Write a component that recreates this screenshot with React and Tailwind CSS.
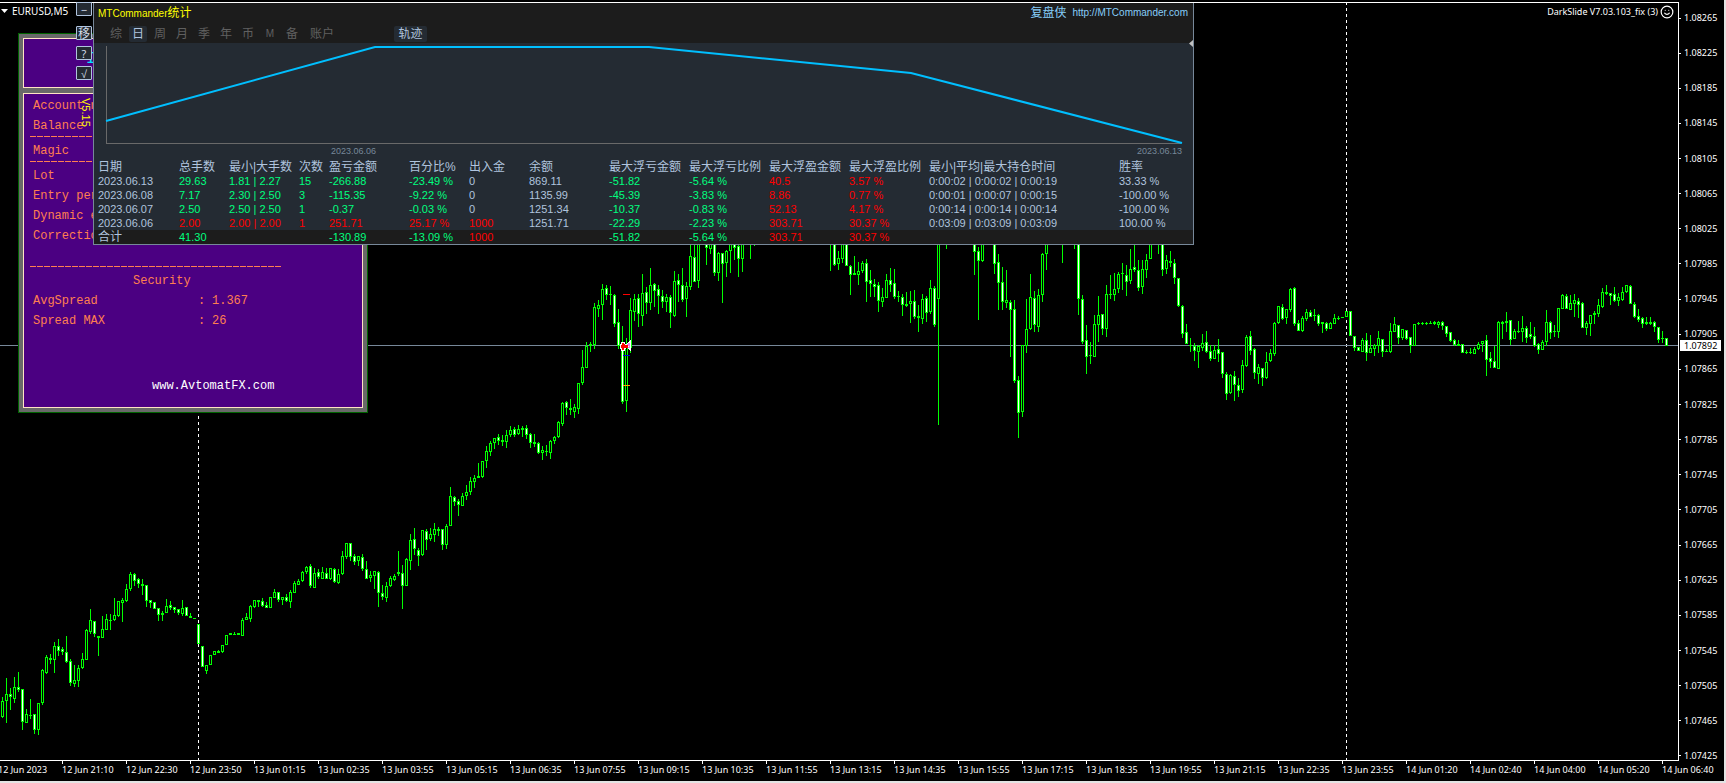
import React from "react";
import { Smile } from "lucide-react";

const CANDLE_STEP = 4;
const FIRST_CANDLE_X = 2;

// One candle per comma: high, body top, body bottom, low; "f" marks a falling (filled) candle.
// "-" leaves the given number of slots empty.
const SERIES = `
697 701 717 718,678 694 701 723,688 694 697 710 f,677 687 699 703,672 687 690 692 f,689 689 722 730 f,
709 714 723 723,699 715 716 719,714 714 730 734 f,703 703 730 735,669 670 703 705,655 657 673 674,
654 658 660 664 f,642 646 660 673,639 646 651 656 f,647 649 652 655 f,636 652 662 663 f,659 661 683 686 f,
665 680 684 687,665 668 681 687,653 659 668 669,629 630 660 660,609 620 632 634,621 621 634 637 f,
636 636 638 656,616 629 638 638,614 619 630 630,614 620 621 630,598 615 620 621,601 601 616 617,
598 600 603 622,584 589 601 602,572 574 589 591,573 574 581 586 f,578 579 584 588 f,579 584 586 595,
585 585 601 607 f,600 600 603 608 f,602 602 609 609 f,608 608 615 621 f,611 613 615 621,599 606 613 613,
601 605 608 610 f,607 607 610 613 f,609 609 613 615 f,600 608 614 616,607 607 616 616 f,613 616 618 618,
618 618 619 619,624 624 644 644 f,646 646 667 667 f,665 665 671 674,655 655 665 665,651 651 655 655,
650 651 653 653,645 645 652 653,635 635 645 645,633 633 635 635,632 634 635 635,633 633 635 635,
618 620 636 636,613 617 620 620,605 606 619 622,600 600 607 608,600 600 602 607,598 601 606 607 f,
602 605 608 608 f,597 597 608 608,589 592 598 598,592 592 600 602 f,597 597 600 605,594 597 601 602 f,
590 592 602 608,581 583 593 593,579 581 585 585,571 572 581 582,566 567 572 574,564 566 586 588 f,
568 573 588 588,569 572 577 579 f,567 572 579 579,568 573 579 579 f,568 568 579 580,568 569 582 583 f,
569 574 583 584,551 556 574 575,543 543 557 559,543 543 557 561 f,554 556 562 565 f,556 556 561 566,
554 557 569 571 f,561 569 579 579 f,571 575 578 582,571 571 576 589,571 572 593 607 f,585 593 597 600 f,
582 586 598 602,576 578 586 587,574 576 580 581,551 572 574 576,565 573 586 609 f,558 559 586 586,
534 540 561 570,528 539 549 555 f,548 550 556 566 f,530 530 555 556,529 531 540 550 f,528 534 539 541,
523 529 535 542,527 529 531 536,529 529 545 550 f,524 526 545 549,487 496 526 526,496 497 502 506 f,
499 501 505 516 f,493 496 506 506,485 492 496 500,477 481 492 495,475 478 482 488,463 476 478 478,
461 461 477 478,446 451 461 468,441 443 452 456,438 438 443 449,434 437 441 445 f,435 440 442 446,
430 435 442 448,426 430 435 437,427 429 435 437 f,425 429 434 435,426 428 430 437,425 428 435 439 f,
433 434 443 448 f,434 442 444 447,442 443 453 454 f,446 450 453 460,445 451 452 456,440 441 453 459,
436 437 441 444,421 422 437 438,402 403 424 426,401 402 408 415 f,399 408 410 415,404 407 412 418,
383 383 409 414,350 367 383 385,342 346 368 368,342 344 346 352,303 307 345 349,300 305 309 317,
284 289 305 320,285 288 295 300 f,286 294 295 305,294 295 324 327 f,309 322 346 349 f,326 346 402 404 f,
338 346 401 412,298 310 348 353,294 299 312 321,294 298 314 327 f,274 293 316 326,287 292 303 314 f,
268 285 303 310,283 284 291 307 f,285 289 296 314 f,290 296 302 308 f,294 297 302 312,295 297 313 328 f,
271 281 316 317,274 280 285 302 f,268 285 300 302 f,282 286 299 317,236 256 287 290,236 257 282 282 f,
236 236 281 288,-1,236 236 248 265 f,236 236 249 254,236 236 273 276 f,252 253 273 281,253 253 264 303 f,
250 251 263 277,236 236 251 273,236 236 248 260 f,236 246 259 277 f,236 236 259 272,-1,236 236 236 259,
236 236 236 246,-18,236 236 236 271,236 236 265 266 f,251 258 264 270,236 236 259 263,236 236 266 266 f,
265 266 275 295 f,256 273 275 275,262 271 275 285,261 263 271 273,259 263 282 302 f,270 280 284 297 f,
279 284 287 297 f,282 285 301 312 f,288 297 302 307,274 280 298 298,268 280 285 292 f,269 283 297 299 f,
291 296 297 302,294 297 305 316 f,292 304 306 307,291 301 304 323,290 301 317 319 f,305 316 318 332,
294 299 319 324,296 298 313 322 f,280 288 312 314,286 288 325 327 f,236 236 299 425,-1,236 236 236 249,-6,
236 236 252 275 f,247 251 261 320 f,236 236 261 262,-2,236 236 264 274 f,254 262 283 310 f,267 282 302 310 f,
270 300 303 308,300 302 310 357 f,300 309 381 383 f,376 380 413 438 f,345 345 412 417,299 329 346 353,
274 297 329 330,291 298 325 332 f,289 295 327 332,253 254 295 302,236 236 254 270,-3,236 236 236 263,-2,
236 236 236 249,236 236 299 315 f,295 299 342 344 f,325 340 357 374 f,342 355 356 364,315 324 357 357,
296 315 325 342,314 314 329 335 f,285 294 329 337,275 294 295 299,273 289 295 301,272 274 289 293,
263 273 274 290,265 275 282 296 f,249 269 281 284,236 267 270 272 f,260 270 288 291 f,260 269 287 294,
254 260 270 278,236 236 259 259,-1,236 236 236 254,236 236 270 276 f,255 260 269 274,251 261 263 267,
259 263 278 284 f,278 278 306 307 f,305 306 334 338 f,324 332 344 344 f,338 345 346 352,343 346 351 361 f,
345 346 352 368,334 343 348 351,331 342 352 353 f,345 351 359 361 f,345 350 359 359,339 349 354 362 f,
352 352 374 378 f,372 374 394 400 f,374 375 393 394,371 376 385 401 f,378 385 391 397 f,360 365 390 393,
335 337 366 367,331 336 351 355 f,348 349 373 379 f,364 367 374 384,368 368 378 386 f,352 362 378 379,
349 353 361 362,322 323 354 356,306 306 323 324,304 307 319 320 f,309 309 318 324,288 289 310 312,
287 288 324 326 f,320 323 331 331 f,316 318 331 332,309 312 319 321,310 312 317 317 f,309 315 316 321,
314 315 324 326 f,322 322 324 333,322 323 329 331 f,322 323 329 329,314 318 324 324,316 318 319 320,
317 317 318 318,311 311 317 317,311 311 336 336 f,336 336 348 351 f,347 347 351 351 f,338 340 352 352,
333 340 353 361 f,335 348 353 353,344 345 349 356,331 338 346 353,339 339 352 357 f,349 351 352 352,
323 331 352 353,317 324 332 332,325 325 338 344 f,329 329 338 340,330 330 339 340 f,337 337 346 353 f,
324 324 346 346,322 323 324 325,322 323 324 325,322 323 324 325,321 323 324 324,321 322 324 325,
321 322 325 328,321 322 326 330 f,326 326 334 337 f,332 332 341 342 f,339 340 345 346 f,340 344 346 346,
344 344 353 353 f,350 352 353 354,348 352 353 354,347 349 354 354,342 344 349 350,341 341 344 352,
335 340 360 376 f,352 358 362 368 f,346 361 368 368 f,321 322 369 369,321 322 324 339,312 321 323 332,
320 320 340 345 f,329 331 339 339,321 331 332 333,316 328 332 342,326 328 338 343 f,322 334 337 339 f,
327 336 346 347 f,343 344 350 354 f,340 342 350 350,310 322 342 346,321 322 333 339 f,325 331 332 337,
308 308 332 338,294 295 309 309,294 296 309 309 f,295 303 310 310,294 300 304 317,298 301 305 318 f,
302 303 328 328 f,321 323 328 335,315 315 324 336,311 313 315 324,299 305 314 317,288 292 307 308,
285 292 294 295,293 293 296 305 f,287 294 301 302 f,293 297 301 306,287 292 300 301,285 285 292 293,
285 286 304 304 f,302 304 317 318 f,309 316 320 322 f,317 318 324 328 f,317 322 324 325,317 322 324 325,
321 322 327 332 f,327 327 340 343 f,331 338 339 343,338 338 346 346 f`;

function parseSeries(text) {
  const candles = [];
  let slot = 0;
  for (const entry of text.replace(/\n/g, "").split(",")) {
    if (entry.startsWith("-")) {
      slot += Number(entry.slice(1));
      continue;
    }
    const [high, top, bottom, low, mark] = entry.split(" ");
    candles.push({
      x: FIRST_CANDLE_X + slot * CANDLE_STEP,
      high: +high,
      top: +top,
      bottom: +bottom,
      low: +low,
      falling: mark === "f",
    });
    slot += 1;
  }
  return candles;
}

const CANDLES = parseSeries(SERIES);

const PRICES = Array.from({ length: 22 }, (_, i) => (1.08265 - i * 0.0004).toFixed(5));

const TIMES = [
  "12 Jun 2023", "12 Jun 21:10", "12 Jun 22:30", "12 Jun 23:50", "13 Jun 01:15", "13 Jun 02:35",
  "13 Jun 03:55", "13 Jun 05:15", "13 Jun 06:35", "13 Jun 07:55", "13 Jun 09:15", "13 Jun 10:35",
  "13 Jun 11:55", "13 Jun 13:15", "13 Jun 14:35", "13 Jun 15:55", "13 Jun 17:15", "13 Jun 18:35",
  "13 Jun 19:55", "13 Jun 21:15", "13 Jun 22:35", "13 Jun 23:55", "14 Jun 01:20", "14 Jun 02:40",
  "14 Jun 04:00", "14 Jun 05:20", "14 Jun 06:40",
];

const COLUMNS = [
  ["日期", "w-[80px]"], ["总手数", "w-[50px]"], ["最小|大手数", "w-[70px]"], ["次数", "w-[30px]"],
  ["盈亏金额", "w-[80px]"], ["百分比%", "w-[60px]"], ["出入金", "w-[60px]"], ["余额", "w-[80px]"],
  ["最大浮亏金额", "w-[80px]"], ["最大浮亏比例", "w-[80px]"], ["最大浮盈金额", "w-[80px]"],
  ["最大浮盈比例", "w-[80px]"], ["最小|平均|最大持仓时间", "w-[190px]"], ["胜率", "w-auto"],
];

// Column tones: n = neutral, g = green, r = red.
const ROWS = [
  { tones: "ngggggnnggrrnn", cells: ["2023.06.13", "29.63", "1.81 | 2.27", "15", "-266.88", "-23.49 %", "0", "869.11", "-51.82", "-5.64 %", "40.5", "3.57 %", "0:00:02 | 0:00:02 | 0:00:19", "33.33 %"] },
  { tones: "ngggggnnggrrnn", cells: ["2023.06.08", "7.17", "2.30 | 2.50", "3", "-115.35", "-9.22 %", "0", "1135.99", "-45.39", "-3.83 %", "8.86", "0.77 %", "0:00:01 | 0:00:07 | 0:00:15", "-100.00 %"] },
  { tones: "ngggggnnggrrnn", cells: ["2023.06.07", "2.50", "2.50 | 2.50", "1", "-0.37", "-0.03 %", "0", "1251.34", "-10.37", "-0.83 %", "52.13", "4.17 %", "0:00:14 | 0:00:14 | 0:00:14", "-100.00 %"] },
  { tones: "nrrrrrrnggrrnn", cells: ["2023.06.06", "2.00", "2.00 | 2.00", "1", "251.71", "25.17 %", "1000", "1251.71", "-22.29", "-2.23 %", "303.71", "30.37 %", "0:03:09 | 0:03:09 | 0:03:09", "100.00 %"] },
];
const TOTAL = { tones: "ngggggrnggrrnn", cells: ["合计", "41.30", "", "", "-130.89", "-13.09 %", "1000", "", "-51.82", "-5.64 %", "303.71", "30.37 %", "", ""] };

const TONES = { n: "text-[#b0c4de]", g: "text-[#00ff7f]", r: "text-[#ff0000]" };

function Candle({ x, high, top, bottom, low, falling }) {
  const inner = bottom - top - 2;
  return (
    <g>
      <rect x={x} y={high} width="1" height={Math.max(low - high, 1)} fill="#00ff00" />
      {bottom > top && <rect x={x - 1} y={top} width="3" height={bottom - top} fill="#00ff00" />}
      {inner > 0 && <rect x={x} y={top + 1} width="1" height={inner} fill={falling ? "#ffffff" : "#000000"} />}
    </g>
  );
}

function PriceChart() {
  return (
    <svg className="block h-full w-full" viewBox="0 3 1678 757" preserveAspectRatio="none" shapeRendering="crispEdges">
      <path d="M198.5 2V760M1346.5 2V760" stroke="#ffffff" strokeDasharray="3 3" />
      <rect x="0" y="345" width="1678" height="1" fill="#778899" />
      {CANDLES.map((c) => (
        <Candle key={c.x} {...c} />
      ))}
      <rect x="623" y="294" width="7" height="1" fill="#ff0000" />
      <rect x="623" y="355" width="7" height="1" fill="#0000cd" />
      <rect x="623" y="385" width="7" height="1" fill="#ffa500" />
      <path d="M630.5 341v9l-5 -4.500z" fill="#ee82ee" stroke="#ffffff" />
      <path d="M622 342h2l1 2l3 2.500l-3 2l-1 2h-2l-1 -2h-1v-4h1z" fill="#ff0000" stroke="#ffffff" />
      <rect x="621" y="345" width="7" height="3" fill="#ff0000" />
    </svg>
  );
}

function ToolButton({ label, children }) {
  return (
    <button type="button" aria-label={label} className="flex h-[14px] w-4 items-center justify-center rounded-[1px] border border-[#b0c4de] bg-[#242b33] text-[11px] leading-none text-[#d3dce8]">
      {children}
    </button>
  );
}

function Rule({ className }) {
  return <div className={`h-px w-[251px] bg-[repeating-linear-gradient(90deg,#ff7f50_0_6px,transparent_6px_7px)] ${className}`} />;
}

function AdvisorPanel() {
  return (
    <section className="absolute left-[18px] top-[33px] flex w-[350px] flex-col gap-[5px] border border-[#006400] bg-[#696969] p-1 font-['Liberation_Mono','Noto_Sans_CJK_SC',monospace] text-[12px] leading-5 text-[#ff7f50]">
      <div className="h-[50px] border border-[#ffe4c4] bg-[#4b0082] pl-[62px] pt-2.5 text-[16px] text-[#00e5ff]">I</div>
      <div className="flex h-[315px] flex-col border border-[#ffe4c4] bg-[#4b0082] pt-0.5">
        <p className="pl-[9px]">Account n</p>
        <p className="pl-[9px]">Balance</p>
        <Rule className="ml-1.5" />
        <p className="mt-1 pl-[9px]">Magic</p>
        <Rule className="ml-1.5" />
        <p className="mt-1 pl-[9px]">Lot</p>
        <p className="pl-[9px]">Entry per</p>
        <p className="pl-[9px]">Dynamic e</p>
        <p className="pl-[9px]">Correction</p>
        <Rule className="ml-1.5 mt-5" />
        <p className="mt-1 pl-[109px]">Security</p>
        <dl className="grid grid-cols-[165px_14px_1fr] pl-[9px]">
          <dt>AvgSpread</dt>
          <dd>:</dd>
          <dd>1.367</dd>
          <dt>Spread MAX</dt>
          <dd>:</dd>
          <dd>26</dd>
        </dl>
        <a href="#avtomatfx" className="mt-auto mb-[11px] pl-[128px] text-white">www.AvtomatFX.com</a>
      </div>
    </section>
  );
}

const tabBase = "flex h-4 items-center justify-center rounded-xs text-[12px] leading-none";

function StatsPanel() {
  return (
    <section className="absolute left-[93px] top-[3px] w-[1101px] border border-t-0 border-[#778899] bg-[#242b33] font-['Liberation_Sans','Noto_Sans_CJK_SC',sans-serif]">
      <header className="flex h-10 flex-col bg-[#1c1c1c]">
        <div className="flex h-5 items-center justify-between pl-1 pr-[5px] text-[12px] leading-none">
          <h1 className="text-[#ffff00]"><span className="text-[10px]">MTCommander</span>统计</h1>
          <a href="#mtcommander" className="flex items-center gap-1.5 text-[#87cefa]">复盘侠 <span className="text-[10px]">http://MTCommander.com</span></a>
        </div>
        <nav className="mt-[3px] flex gap-1 pl-[13px] text-[#606060]">
          <button type="button" className={`${tabBase} w-[18px]`}>综</button>
          <button type="button" className={`${tabBase} w-[18px] bg-[#242b33] text-[#b0c4de]`}>日</button>
          <button type="button" className={`${tabBase} w-[18px]`}>周</button>
          <button type="button" className={`${tabBase} w-[18px]`}>月</button>
          <button type="button" className={`${tabBase} w-[18px]`}>季</button>
          <button type="button" className={`${tabBase} w-[18px]`}>年</button>
          <button type="button" className={`${tabBase} w-[18px]`}>币</button>
          <button type="button" className={`${tabBase} w-[18px]`}><span className="text-[10px]">M</span></button>
          <button type="button" className={`${tabBase} w-[18px]`}>备</button>
          <button type="button" className={`${tabBase} w-[34px]`}>账户</button>
          <button type="button" className={`${tabBase} ml-[51px] w-[33px] bg-[#242b33] text-[#b0c4de]`}>轨迹</button>
        </nav>
      </header>
      <svg className="absolute right-0 top-[37px] h-[7px] w-1" viewBox="0 0 4 7">
        <path d="M4 0v7L0 3.500z" fill="#c0c0c0" />
      </svg>
      <svg className="block h-[102px] w-full" viewBox="94 43 1099 102" preserveAspectRatio="none">
        <path d="M106.500 46V143.500H1181" fill="none" stroke="#696969" shapeRendering="crispEdges" />
        <polyline points="106,121 375,47 649,47 911,73 1182,143" fill="none" stroke="#00bfff" strokeWidth="2" />
      </svg>
      <div className="flex h-4 justify-between pl-[237px] pr-[11px] text-[9px] leading-3 text-[#778899]">
        <span>2023.06.06</span>
        <span>2023.06.13</span>
      </div>
      <table className="w-full table-fixed border-collapse text-left text-[11px] leading-[14px]">
        <colgroup>
          <col className="w-[85px]" />
          {COLUMNS.slice(1).map(([name, width]) => (
            <col key={name} className={width} />
          ))}
        </colgroup>
        <thead>
          <tr>
            {COLUMNS.map(([name]) => (
              <th key={name} scope="col" className="whitespace-nowrap p-0 text-[12px] font-normal leading-[13px] text-[#b0c4de] first:pl-1">{name}</th>
            ))}
          </tr>
        </thead>
        <tbody>
          {ROWS.map((row) => (
            <tr key={row.cells[0]}>
              {row.cells.map((cell, i) => (
                <td key={i} className={`whitespace-nowrap p-0 first:pl-1 ${TONES[row.tones[i]]}`}>{cell}</td>
              ))}
            </tr>
          ))}
        </tbody>
        <tfoot>
          <tr className="bg-[#1c1c1c]">
            {TOTAL.cells.map((cell, i) => (
              <td key={i} className={`whitespace-nowrap p-0 first:pl-1 first:text-[12px] ${TONES[TOTAL.tones[i]]}`}>{cell}</td>
            ))}
          </tr>
        </tfoot>
      </table>
    </section>
  );
}

export default function App() {
  return (
    <main className="relative flex h-screen w-full flex-col overflow-hidden border-b-2 border-r-2 border-[#e3e3e3] bg-black font-['Noto_Sans',sans-serif] text-[9px] text-white">
      <div className="flex min-h-0 flex-1">
        <div className="relative mt-0.5 min-w-0 flex-1 border-b border-r border-t border-white">
          <PriceChart />
          <p className="absolute left-px top-0.5 flex items-center gap-1 text-[10px] leading-3">
            <svg className="h-1 w-[7px]" viewBox="0 0 7 4"><path d="M0 0h7L3.500 4z" fill="#ffffff" /></svg>
            EURUSD,M5
          </p>
          <p className="absolute right-1 top-0.5 flex items-center gap-0.5 leading-3">
            DarkSlide V7.03.103_fix (3)
            <Smile className="h-3.5 w-3.5" strokeWidth={2} />
          </p>
        </div>
        <div className="relative -mb-px flex w-[45px] flex-col justify-between pt-3">
          {PRICES.map((price) => (
            <div key={price} className="flex items-center gap-[3px] leading-3">
              <span className="h-px w-0.5 bg-white" />
              {price}
            </div>
          ))}
          <div className="absolute left-px top-[340px] h-[11px] w-[41px] bg-white pl-1 leading-[11px] text-black">1.07892</div>
        </div>
      </div>
      <div className="-ml-0.5 flex h-5 shrink-0">
        {TIMES.map((time) => (
          <div key={time} className="w-16 shrink-0 whitespace-nowrap">
            <div className="h-[3px] w-px bg-white" />
            <div className="leading-3">{time}</div>
          </div>
        ))}
      </div>

      <AdvisorPanel />
      <div className="absolute left-[76px] top-[2px] flex flex-col gap-1.5">
        <div className="mb-1">
          <ToolButton label="最小化">−</ToolButton>
        </div>
        <ToolButton label="移动"><span className="font-['Noto_Sans_CJK_SC',sans-serif] text-[12px]">移</span></ToolButton>
        <ToolButton label="帮助">?</ToolButton>
        <ToolButton label="确定">√</ToolButton>
      </div>
      <span className="absolute left-[80px] top-[98px] font-['Liberation_Sans',sans-serif] text-[11px] leading-3 text-[#ffff00] [writing-mode:vertical-rl]">V5.15</span>
      <StatsPanel />
    </main>
  );
}
